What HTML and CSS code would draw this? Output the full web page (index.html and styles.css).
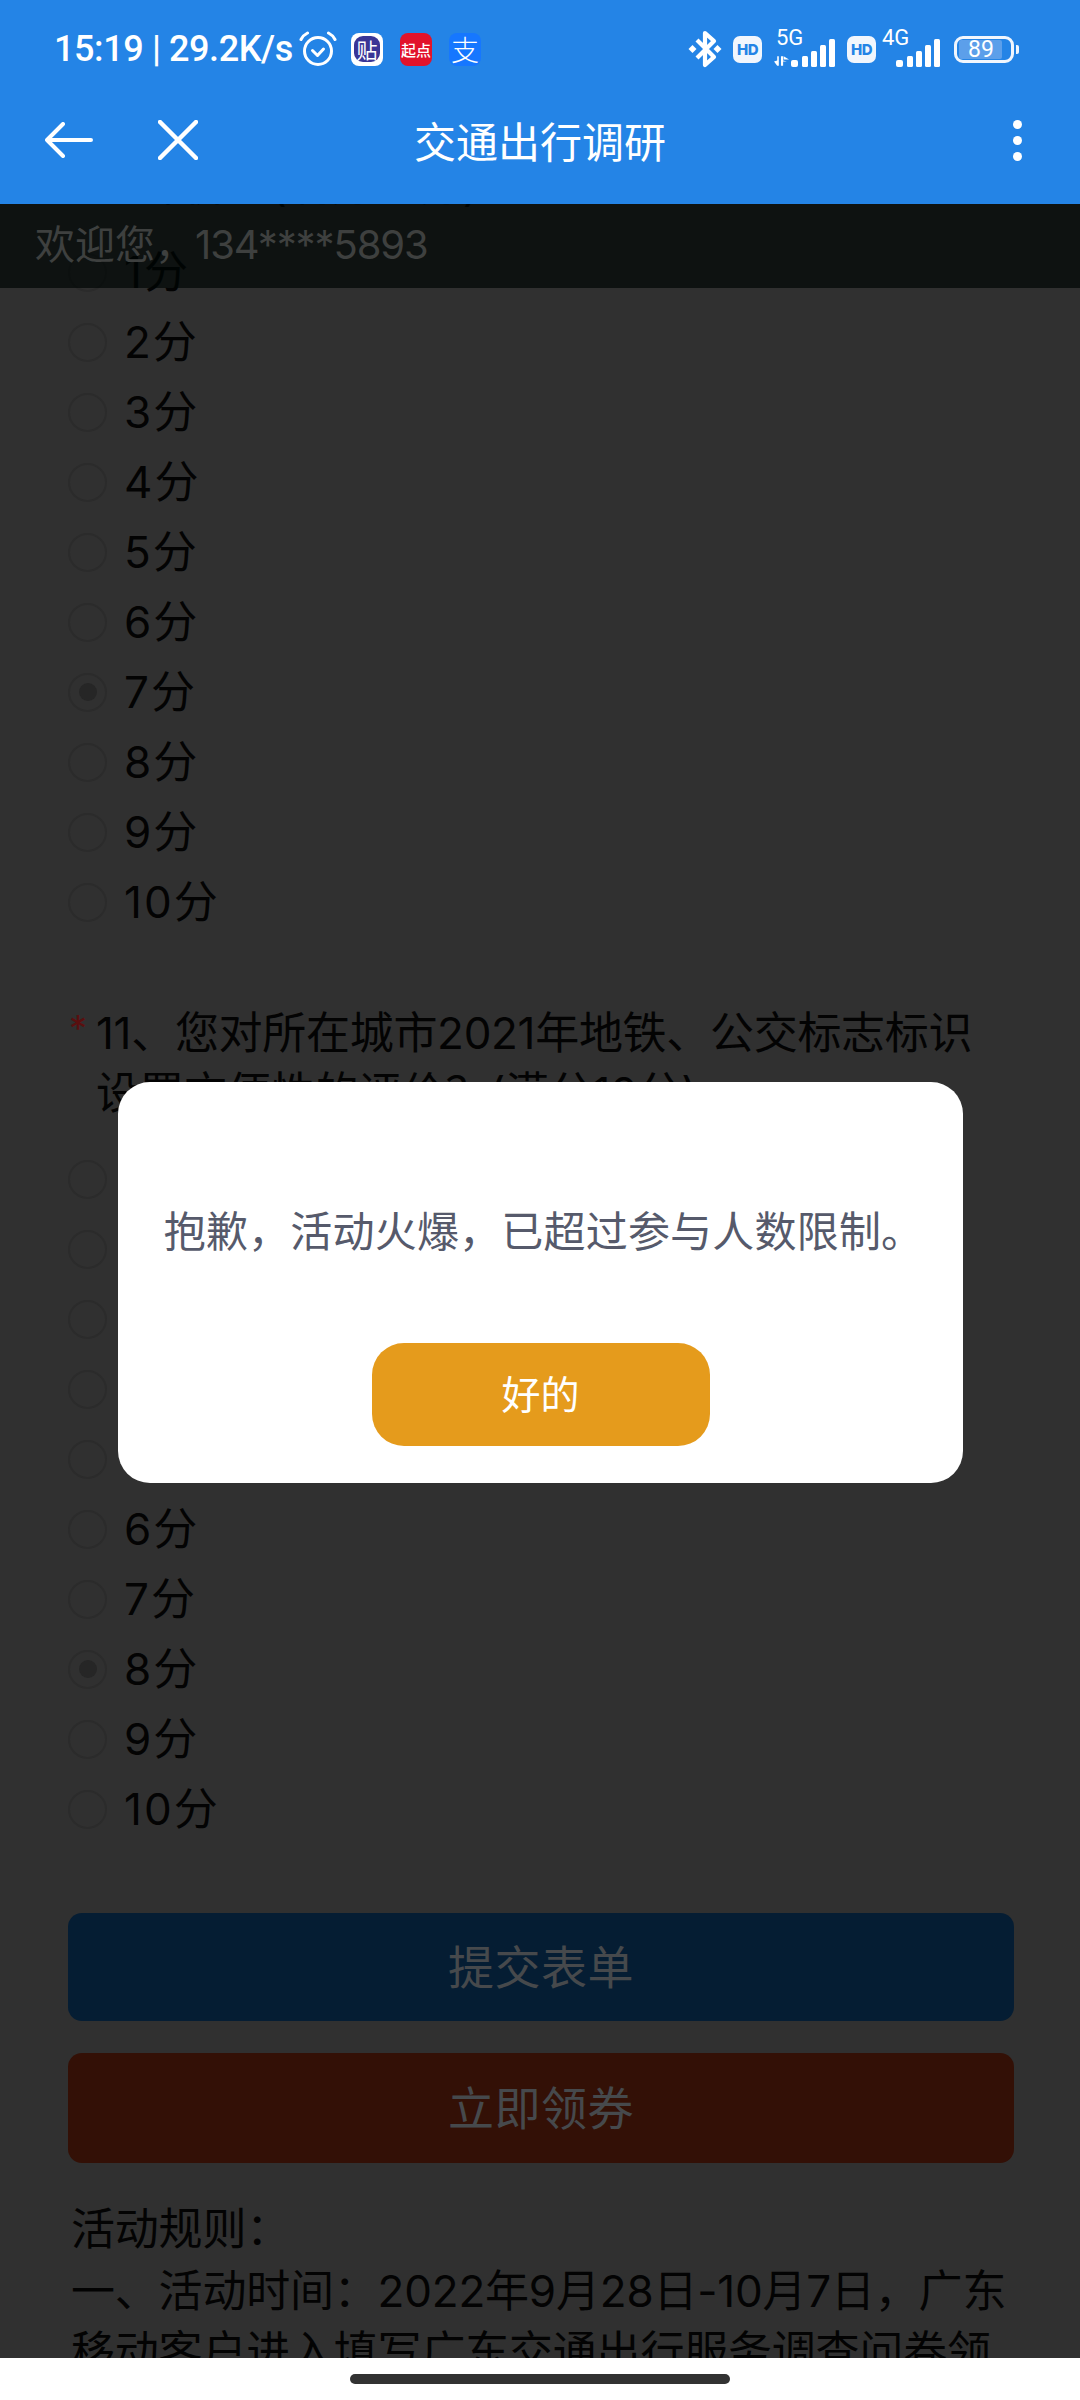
FILE: index.html
```html
<!DOCTYPE html>
<html lang="zh-CN">
<head>
<meta charset="utf-8">
<title>交通出行调研</title>
<link rel="stylesheet" href="styles.css">
</head>
<body>
<div class="app">
  <header class="topbar">
    <div class="status">
      <div class="status-left">
        <span class="clock">15:19 | 29.2K/s</span>
        <svg class="alarm" viewBox="0 0 38 36" fill="none" stroke="#fff" stroke-width="3" stroke-linecap="round" stroke-linejoin="round">
          <circle cx="19" cy="20" r="13.5"/>
          <path d="M13.5 19.5l5 5 6-6.5"/>
          <path d="M2 8.500c1.500-3 3.500-5 6.500-6.500M36 8.500c-1.500-3-3.500-5-6.500-6.500"/>
        </svg>
        <span class="app-icon tie"><span class="tie-inner">贴</span></span>
        <span class="app-icon qidian">起点</span>
        <span class="app-icon alipay">支</span>
      </div>
      <div class="status-right">
        <svg class="bt" viewBox="0 0 34 38" fill="none" stroke="#fff" stroke-width="4.200" stroke-linejoin="round">
          <path d="M9 10l17 17-9 8V3l9 8-17 17"/>
          <path d="M0.500 19l4-4 4 4-4 4zM25.500 19l4-4 4 4-4 4z" fill="#fff" stroke="none"/>
        </svg>
        <span class="hd">HD</span>
        <span class="net net-5g">
          <span class="net-label">5G</span>
          <svg class="arrows" viewBox="0 0 14 9" fill="#fff"><path d="M4.500 0v9H3L0 5l3-1V0zM6.500 0h2v4L12 5H8.500v4h-2zM9 0l5 3H9z"/></svg>
          <svg class="bars" viewBox="0 0 45 28" fill="#fff"><rect y="21" width="7" height="7" rx="2"/><rect x="11" y="17" width="6" height="11" rx="1.500"/><rect x="20" y="12" width="6" height="16" rx="1.500"/><rect x="29" y="6" width="6" height="22" rx="1.500"/><rect x="38" width="6" height="28" rx="1.500"/></svg>
        </span>
        <span class="hd">HD</span>
        <span class="net net-4g">
          <span class="net-label">4G</span>
          <svg class="bars" viewBox="0 0 45 28" fill="#fff"><rect y="21" width="7" height="7" rx="2"/><rect x="11" y="17" width="6" height="11" rx="1.500"/><rect x="20" y="12" width="6" height="16" rx="1.500"/><rect x="29" y="6" width="6" height="22" rx="1.500"/><rect x="38" width="6" height="28" rx="1.500"/></svg>
        </span>
        <span class="battery"><span class="battery-fill"></span><span class="battery-num">89</span></span>
        <span class="battery-nub"></span>
      </div>
    </div>
    <nav class="nav">
      <div class="nav-left">
        <svg class="nav-back" viewBox="0 0 48 36" fill="none" stroke="#fff" stroke-width="4" stroke-linecap="round" stroke-linejoin="round"><path d="M2 18h44M18 2L2 18l16 16"/></svg>
        <svg class="nav-close" viewBox="0 0 40 40" fill="none" stroke="#fff" stroke-width="4.500" stroke-linecap="round"><path d="M2 2l36 36M38 2L2 38"/></svg>
      </div>
      <div class="nav-title">交通出行调研</div>
      <div class="nav-right">
        <span class="menu"><i></i><i></i><i></i></span>
      </div>
    </nav>
  </header>

  <main class="page">
    <div class="welcome">欢迎您，<span class="phone">134****5893</span></div>
    <form class="form">
      <p class="q-line">的评价？(满分10分)</p>
      <div class="options">
        <label class="opt"><span class="radio"></span>1分</label>
        <label class="opt"><span class="radio"></span>2分</label>
        <label class="opt"><span class="radio"></span>3分</label>
        <label class="opt"><span class="radio"></span>4分</label>
        <label class="opt"><span class="radio"></span>5分</label>
        <label class="opt"><span class="radio"></span>6分</label>
        <label class="opt"><span class="radio on"></span>7分</label>
        <label class="opt"><span class="radio"></span>8分</label>
        <label class="opt"><span class="radio"></span>9分</label>
        <label class="opt"><span class="radio"></span>10分</label>
      </div>
      <div class="question">
        <span class="star">*</span>
        <p class="q-line">11、您对所在城市2021年地铁、公交标志标识<br>设置方便性的评价？(满分10分)</p>
      </div>
      <div class="options second">
        <label class="opt"><span class="radio"></span>1分</label>
        <label class="opt"><span class="radio"></span>2分</label>
        <label class="opt"><span class="radio"></span>3分</label>
        <label class="opt"><span class="radio"></span>4分</label>
        <label class="opt"><span class="radio"></span>5分</label>
        <label class="opt"><span class="radio"></span>6分</label>
        <label class="opt"><span class="radio"></span>7分</label>
        <label class="opt"><span class="radio on"></span>8分</label>
        <label class="opt"><span class="radio"></span>9分</label>
        <label class="opt"><span class="radio"></span>10分</label>
      </div>
      <div class="actions">
        <div class="btn btn-blue">提交表单</div>
        <div class="btn btn-red">立即领券</div>
      </div>
      <div class="rules">
        <p>活动规则：</p>
        <p>一、活动时间：2022年9月28日-10月7日，广东</p>
        <p>移动客户进入填写广东交通出行服务调查问卷领</p>
      </div>
    </form>
  </main>

  <footer class="homebar"><span class="handle"></span></footer>

  <div class="dialog-wrap">
    <div class="dialog">
      <p class="dialog-text">抱歉，活动火爆，已超过参与人数限制。</p>
      <div class="dialog-btn">好的</div>
    </div>
  </div>
</div>
</body>
</html>
```

FILE: styles.css
```css
* { box-sizing: border-box; }
html, body { margin: 0; padding: 0; }
body {
  font-family: Inter, "Noto Sans CJK SC", sans-serif;
  background: #303030;
}
p { margin: 0; }

.app {
  position: relative;
  width: 1080px;
  height: 2400px;
  overflow: hidden;
  display: flex;
  flex-direction: column;
  background: #303030;
}

/* top bar */
.topbar { background: #2484e6; color: #fff; height: 204px; flex: none; }
.status {
  height: 98px;
  display: flex;
  justify-content: space-between;
  align-items: center;
  padding: 0 61px 0 54px;
}
.status-left, .status-right { display: flex; align-items: center; }
.clock {
  font-family: Roboto, sans-serif;
  font-size: 36px;
  line-height: 40px;
  font-weight: 500;
  letter-spacing: -0.400px;
  margin-right: 6px;
  white-space: nowrap;
}
.alarm { width: 38px; height: 36px; margin-right: 14px; }
.app-icon {
  width: 32px;
  height: 33px;
  margin-right: 17px;
  border-radius: 8px;
  display: flex;
  align-items: center;
  justify-content: center;
  color: #fff;
  font-family: "Noto Sans CJK SC", sans-serif;
  white-space: nowrap;
}
.tie { background: #fff; }
.tie-inner {
  width: 26px;
  height: 26px;
  border-radius: 9px;
  background: #3a3596;
  color: #fff;
  font-size: 21px;
  line-height: 26px;
  text-align: center;
}
.qidian { background: #e2132b; font-size: 15px; font-weight: 500; }
.alipay { background: #1677ff; font-size: 28px; font-weight: 300; margin-right: 0; }

.bt { width: 34px; height: 38px; margin-right: 11px; }
.hd {
  width: 29px;
  height: 27px;
  background: #f1f6fd;
  border-radius: 7px;
  color: #2484e6;
  font-size: 15px;
  font-weight: 800;
  line-height: 27px;
  text-align: center;
  font-family: Inter, sans-serif;
  letter-spacing: -0.5px;
}
.net { position: relative; display: block; height: 36px; }
.net-5g { width: 62px; margin: 0 11px 0 12px; }
.net-4g { width: 58px; margin: 0 13px 0 7px; }
.net-label {
  position: absolute;
  top: -4px;
  font-size: 22px;
  line-height: 22px;
  font-family: Roboto, sans-serif;
}
.net-5g .net-label { left: 2px; }
.net-4g .net-label { left: -1px; }
.bars { position: absolute; right: 0; bottom: 0; width: 45px; height: 28px; }
.arrows { position: absolute; left: 0; bottom: 1px; width: 15px; height: 10px; }
.battery {
  position: relative;
  width: 60px;
  height: 27px;
  border: 3px solid #f1f6fd;
  border-radius: 9px;
  display: block;
}
.battery-fill { position: absolute; left: 2px; top: 1px; bottom: 1px; width: 43px; background: #5c9fea; border-radius: 2px; }
.battery-num {
  position: absolute;
  left: 0; right: 6px; top: 0;
  text-align: center;
  font-size: 23px;
  line-height: 21px;
  font-family: Roboto, sans-serif;
}
.battery-nub { width: 3px; height: 9px; background: #f1f6fd; border-radius: 0 2px 2px 0; margin-left: 2px; }

.nav {
  height: 106px;
  display: grid;
  grid-template-columns: 1fr auto 1fr;
  align-items: center;
  padding-bottom: 22px;
}
.nav-left { display: flex; align-items: center; padding-left: 45px; gap: 65px; }
.nav-back { width: 48px; height: 36px; }
.nav-close { width: 40px; height: 40px; }
.nav-title { font-size: 42px; line-height: 48px; font-family: "Noto Sans CJK SC", sans-serif; }
.nav-right { display: flex; justify-content: flex-end; padding-right: 58px; }
.menu { display: flex; flex-direction: column; gap: 7px; }
.menu i { display: block; width: 9px; height: 9px; border-radius: 50%; background: #fff; }

/* page */
.page { position: relative; flex: 1; overflow: hidden; }
.welcome {
  position: absolute;
  left: 0; right: 0; top: 0;
  height: 84px;
  padding-left: 35px;
  background: rgba(0, 6, 4, 0.7);
  color: #3e403f;
  font-size: 40px;
  line-height: 82px;
  white-space: nowrap;
}
.phone { letter-spacing: -1.100px; }
.form {
  margin-top: -49px;
  padding: 0 66px 0 68px;
  color: #030303;
  font-size: 44px;
}
.q-line { padding-left: 28px; font-size: 44px; line-height: 60px; white-space: nowrap; letter-spacing: -0.300px; }
.options { margin-top: 22px; }
.options.second { margin-top: 21px; }
.opt { display: flex; align-items: center; height: 70px; gap: 17px; line-height: 70px; letter-spacing: 2px; }
.radio {
  width: 39px;
  height: 39px;
  border-radius: 50%;
  border: 2px solid #2b2b2b;
  display: flex;
  align-items: center;
  justify-content: center;
  flex: none;
}
.radio.on::after { content: ""; width: 18px; height: 18px; border-radius: 50%; background: #262626; }
.question { position: relative; margin-top: 66px; }
.star {
  position: absolute;
  left: 1px;
  top: 0;
  color: #5a0f0f;
  font-size: 36px;
  line-height: 50px;
}
.actions { margin-top: 69px; display: flex; flex-direction: column; gap: 32px; }
.btn {
  height: 108px;
  border-radius: 14px;
  color: #46494c;
  font-size: 46px;
  line-height: 108px;
  text-align: center;
  letter-spacing: 0.500px;
}
.btn-blue { background: #051d33; }
.btn-red { height: 110px; line-height: 110px; background: #331006; }
.rules { margin-top: 36px; padding-left: 3px; white-space: nowrap; line-height: 61.500px; letter-spacing: -0.200px; }

.homebar {
  height: 42px;
  flex: none;
  background: #fff;
  display: flex;
  justify-content: center;
  padding-top: 16px;
}
.handle { width: 380px; height: 10px; border-radius: 5px; background: #323232; }

/* dialog */
.dialog-wrap {
  position: absolute;
  inset: 0;
  padding: 1082px 0 0 1px;
  display: flex;
  justify-content: center;
  align-items: flex-start;
}
.dialog {
  width: 845px;
  height: 401px;
  background: #fff;
  border-radius: 32px;
  display: flex;
  flex-direction: column;
  align-items: center;
}
.dialog-text {
  margin: 120px 0 0 6px;
  height: 60px;
  font-size: 42px;
  line-height: 60px;
  color: #565a6b;
  letter-spacing: 0.200px;
  white-space: nowrap;
}
.dialog-btn {
  margin-top: 81px;
  width: 338px;
  height: 103px;
  border-radius: 32px;
  background: #e59b1c;
  color: #fff;
  font-size: 39px;
  line-height: 103px;
  text-align: center;
}
```
